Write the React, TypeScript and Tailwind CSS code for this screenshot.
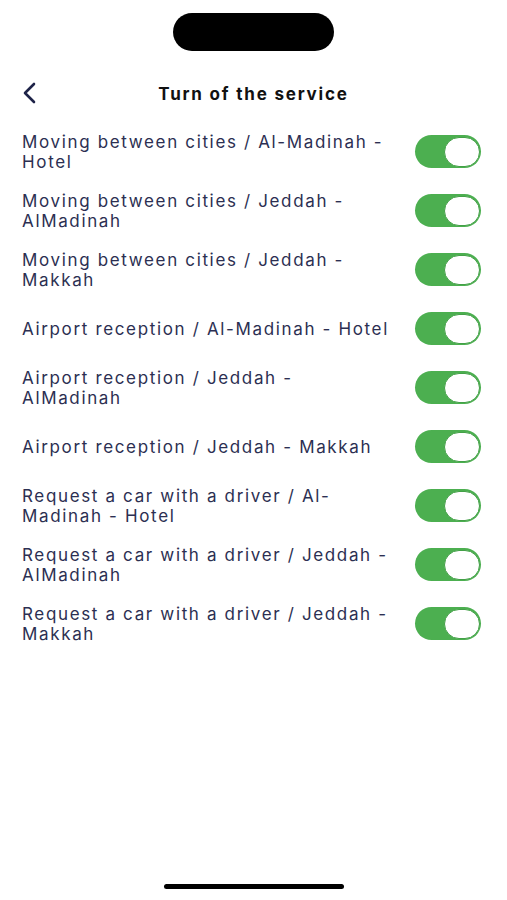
const services = [
  "Moving between cities / Al-Madinah - Hotel",
  "Moving between cities / Jeddah - AlMadinah",
  "Moving between cities / Jeddah - Makkah",
  "Airport reception / Al-Madinah - Hotel",
  "Airport reception / Jeddah - AlMadinah",
  "Airport reception / Jeddah - Makkah",
  "Request a car with a driver / Al-Madinah - Hotel",
  "Request a car with a driver / Jeddah - AlMadinah",
  "Request a car with a driver / Jeddah - Makkah",
];

function Toggle() {
  return (
    <div className="w-[66px] h-[33px] rounded-full bg-[#4caf50] flex items-center justify-end p-[1.5px] shrink-0">
      <div className="h-[30px] w-[36px] rounded-full bg-white border-[1.5px] border-[#43a047]" />
    </div>
  );
}

export default function App() {
  return (
    <div className="w-[507px] h-[900px] bg-white flex flex-col font-['Inter',sans-serif]">
      <div className="flex justify-center pt-[13px]">
        <div className="w-[161px] h-[38px] rounded-full bg-black" />
      </div>

      <div className="relative flex items-center justify-center h-[30px] mt-[29px]">
        <svg className="absolute left-[20px] top-[1px]" width="20" height="24" viewBox="0 0 20 24" fill="none">
          <path d="M14 3 L5 12 L14 21" stroke="#1e2348" strokeWidth="2.6" strokeLinecap="round" strokeLinejoin="round" />
        </svg>
        <h1 className="text-[17px] font-bold text-[#111] tracking-[1.8px]">Turn of the service</h1>
      </div>

      <div className="flex flex-col mt-[12px] pl-[22px] pr-[26px]">
        {services.map((s) => (
          <div key={s} className="flex items-center justify-between h-[59px]">
            <p className="text-[17px] leading-[20px] text-[#2c2f52] tracking-[1.65px] w-[372px]">{s}</p>
            <Toggle />
          </div>
        ))}
      </div>

      <div className="mt-auto flex justify-center pb-[11px]">
        <div className="w-[180px] h-[5px] rounded-full bg-black" />
      </div>
    </div>
  );
}
